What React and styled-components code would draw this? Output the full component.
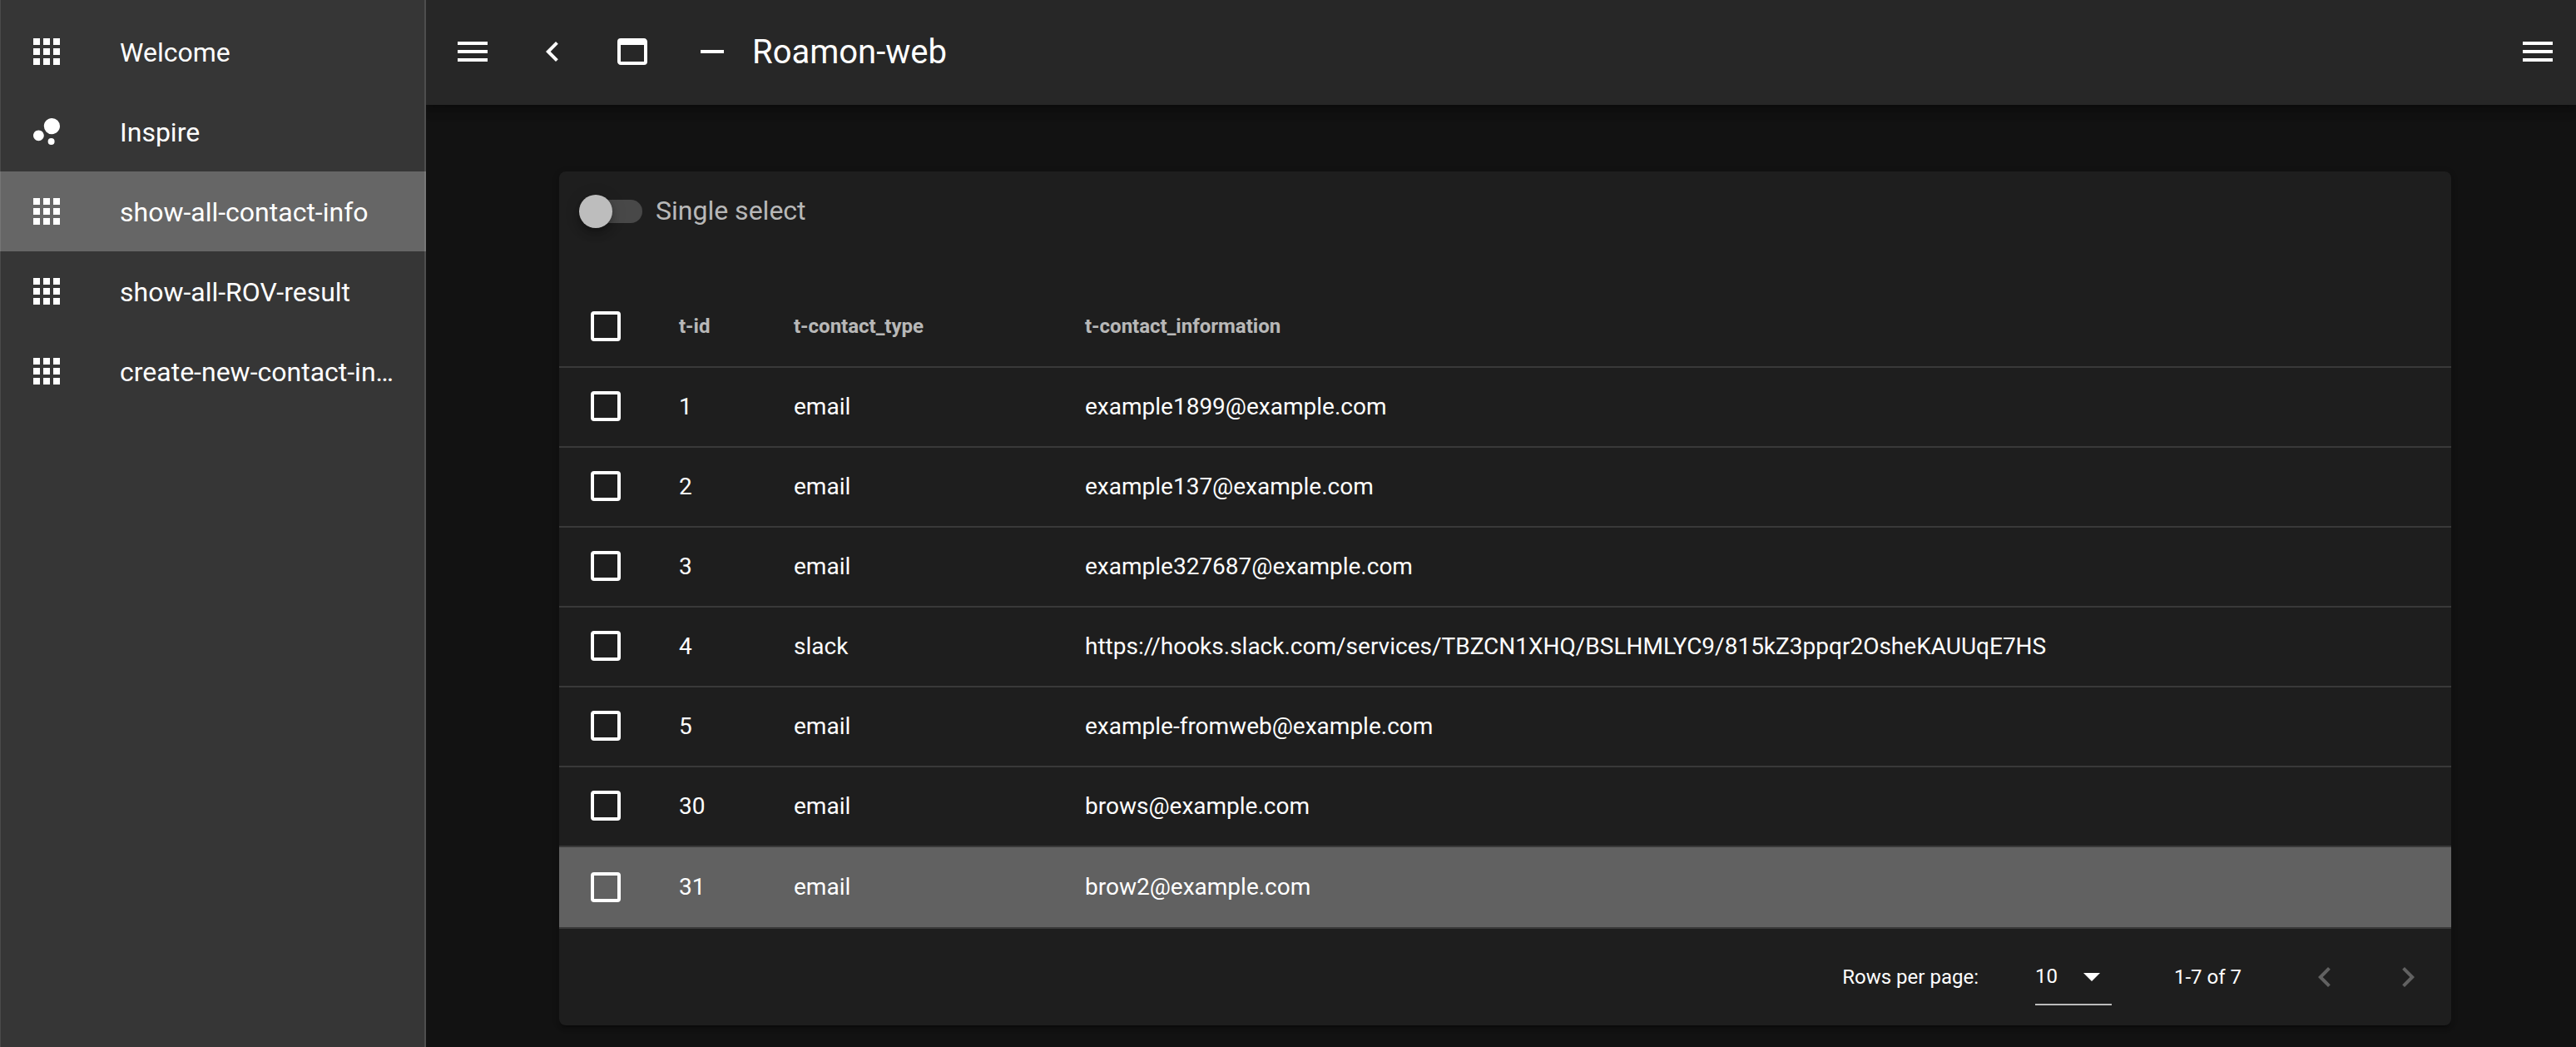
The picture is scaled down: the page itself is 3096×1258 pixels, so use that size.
import React, { useState } from "react";
import styled, { createGlobalStyle } from "styled-components";

const GlobalStyle = createGlobalStyle`
  *, *::before, *::after { box-sizing: border-box; }
  body {
    margin: 0;
    background: #121212;
    color: #fff;
    font-family: Roboto, "Noto Sans", sans-serif;
    font-size: 32px;
    line-height: 48px;
  }
  button, input, select { font: inherit; color: inherit; }
`;

const paths = {
  apps: "M16,20H20V16H16M16,14H20V10H16M10,8H14V4H10M16,8H20V4H16M10,14H14V10H10M4,14H8V10H4M4,20H8V16H4M10,20H14V16H10M4,8H8V4H4V8Z",
  bubble: "M7.2,11.2C8.97,11.2 10.4,12.63 10.4,14.4C10.4,16.17 8.97,17.6 7.2,17.6C5.43,17.6 4,16.17 4,14.4C4,12.63 5.43,11.2 7.2,11.2M14.8,16A2,2 0 0,1 16.8,18A2,2 0 0,1 14.8,20A2,2 0 0,1 12.8,18A2,2 0 0,1 14.8,16M15.2,4A4.8,4.8 0 0,1 20,8.8C20,11.45 17.85,13.6 15.2,13.6A4.8,4.8 0 0,1 10.4,8.8C10.4,6.15 12.55,4 15.2,4Z",
  menu: "M3,6H21V8H3V6M3,11H21V13H3V11M3,16H21V18H3V16Z",
  left: "M15.41,16.58L10.83,12L15.41,7.41L14,6L8,12L14,18L15.41,16.58Z",
  right: "M8.59,16.58L13.17,12L8.59,7.41L10,6L16,12L10,18L8.59,16.58Z",
  application: "M19,4C20.11,4 21,4.9 21,6V18A2,2 0 0,1 19,20H5C3.89,20 3,19.1 3,18V6A2,2 0 0,1 5,4H19M19,18V8H5V18H19Z",
  minus: "M19,13H5V11H19V13Z",
  down: "M7,10L12,15L17,10H7Z",
};

const IconSvg = styled.svg`
  width: 48px;
  height: 48px;
  flex: none;
  display: block;
  fill: currentColor;
`;

const Icon = ({ name, className }) => (
  <IconSvg className={className} viewBox="0 0 24 24" aria-hidden="true">
    <path d={paths[name]} />
  </IconSvg>
);

const Shell = styled.div`
  display: flex;
  min-height: 100vh;
`;

const Drawer = styled.nav`
  width: 512px;
  flex: none;
  padding-top: 14px;
  background: #363636;
  border-right: 2px solid #4e4e4e;
  box-shadow: inset 1px 0 #4a4a4a;
`;

const NavLink = styled.a`
  display: flex;
  align-items: center;
  gap: 64px;
  height: 96px;
  padding: 0 32px;
  margin-right: -2px;
  color: #fff;
  text-decoration: none;
  background: ${(p) => (p.$active ? "rgba(255, 255, 255, 0.24)" : "transparent")};
`;

const NavTitle = styled.span`
  min-width: 0;
  padding-top: 2px;
  overflow: hidden;
  white-space: nowrap;
  text-overflow: ellipsis;
`;

const Page = styled.div`
  flex: 1;
  min-width: 0;
  display: flex;
  flex-direction: column;
`;

const AppBar = styled.header`
  display: flex;
  align-items: center;
  height: 126px;
  padding: 0 0 2px 8px;
  background: #272727;
  box-shadow: 0 4px 8px -2px rgba(0, 0, 0, 0.2), 0 8px 10px rgba(0, 0, 0, 0.14),
    0 2px 20px rgba(0, 0, 0, 0.12);
  clip-path: inset(0 0 -40px 0);
`;

const BarButton = styled.button`
  display: flex;
  align-items: center;
  justify-content: center;
  width: 96px;
  height: 96px;
  flex: none;
  padding: 0;
  border: 0;
  background: none;
`;

const BarTitle = styled.h1`
  flex: 1;
  margin: 0;
  padding-top: 2px;
  font-size: 40px;
  font-weight: 400;
`;

const EndButton = styled(BarButton)`
  margin-right: -2px;
`;

const Content = styled.main`
  padding: 80px 150px 24px 160px;
`;

const Card = styled.section`
  background: #1e1e1e;
  border-radius: 8px;
  box-shadow: 0 6px 2px -4px rgba(0, 0, 0, 0.2), 0 4px 4px rgba(0, 0, 0, 0.14),
    0 2px 10px rgba(0, 0, 0, 0.12);
`;

const SwitchRow = styled.label`
  display: flex;
  align-items: center;
  gap: 16px;
  height: 140px;
  padding: 0 28px 44px;
  color: rgba(255, 255, 255, 0.7);
`;

const SwitchLabel = styled.span`
  padding-bottom: 2px;
`;

const Switch = styled.input`
  appearance: none;
  display: flex;
  align-items: center;
  width: 72px;
  height: 28px;
  margin: 0;
  border-radius: 14px;
  background: #484848;

  &::before {
    content: "";
    width: 40px;
    height: 40px;
    flex: none;
    margin-left: ${(p) => (p.checked ? "36px" : "-4px")};
    border-radius: 50%;
    background: #bdbdbd;
    box-shadow: 0 4px 8px -2px rgba(0, 0, 0, 0.2), 0 8px 10px rgba(0, 0, 0, 0.14),
      0 2px 20px rgba(0, 0, 0, 0.12);
  }
`;

const Table = styled.table`
  width: 100%;
  table-layout: fixed;
  border-collapse: separate;
  border-spacing: 0;
  font-size: 28px;
`;

const Col = styled.col`
  width: ${(p) => p.$width || "auto"};
`;

const Row = styled.tr`
  background: ${(p) => (p.$hovered ? "#616161" : "transparent")};
`;

const HeadCell = styled.th`
  height: 96px;
  padding: 0 32px 2px;
  border-bottom: 2px solid #393939;
  color: rgba(255, 255, 255, 0.7);
  font-size: 24px;
  font-weight: 700;
  text-align: left;
`;

const Cell = styled.td`
  height: 96px;
  padding: 0 32px;
  border-bottom: 2px solid #393939;

  tr:last-child > & { border-bottom: 0; }
`;

const CheckBox = styled.input`
  appearance: none;
  display: block;
  width: 36px;
  height: 36px;
  margin: 0 6px;
  border: 4px solid #fff;
  border-radius: 4px;
  background: ${(p) => (p.checked ? "#fff" : "transparent")};

  tr:not(:last-child) > td > & { margin-bottom: 2px; }
`;

const Footer = styled.footer`
  display: flex;
  align-items: center;
  justify-content: flex-end;
  height: 118px;
  padding-right: 16px;
  border-top: 2px solid #393939;
  font-size: 24px;
`;

const PerPage = styled.label`
  display: flex;
  align-items: center;
  gap: 68px;
`;

const SelectBox = styled.span`
  display: grid;
  align-items: center;
  width: 92px;
  height: 68px;
  border-bottom: 2px solid #bcbcbc;
`;

const Select = styled.select`
  grid-area: 1 / 1;
  appearance: none;
  width: 100%;
  height: 64px;
  padding: 0;
  border: 0;
  background: transparent;
`;

const Arrow = styled(Icon)`
  grid-area: 1 / 1;
  justify-self: end;
  pointer-events: none;
`;

const Range = styled.span`
  margin: 0 64px 0 75px;
`;

const Pager = styled.div`
  display: flex;
  gap: 28px;
`;

const PageButton = styled.button`
  display: flex;
  align-items: center;
  justify-content: center;
  width: 72px;
  height: 72px;
  padding: 0;
  border: 0;
  background: none;

  &:disabled { color: rgba(255, 255, 255, 0.3); }
`;

const links = [
  { icon: "apps", title: "Welcome" },
  { icon: "bubble", title: "Inspire" },
  { icon: "apps", title: "show-all-contact-info", active: true },
  { icon: "apps", title: "show-all-ROV-result" },
  { icon: "apps", title: "create-new-contact-in…" },
];

const contacts = [
  { id: 1, type: "email", info: "example1899@example.com" },
  { id: 2, type: "email", info: "example137@example.com" },
  { id: 3, type: "email", info: "example327687@example.com" },
  { id: 4, type: "slack", info: "https://hooks.slack.com/services/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" },
  { id: 5, type: "email", info: "example-fromweb@example.com" },
  { id: 30, type: "email", info: "brows@example.com" },
  { id: 31, type: "email", info: "brow2@example.com" },
];

export default function App() {
  const [single, setSingle] = useState(false);
  const [selected, setSelected] = useState([]);
  const [hovered, setHovered] = useState(31);

  const toggle = (id) =>
    setSelected((now) => {
      if (now.includes(id)) return now.filter((x) => x !== id);
      return single ? [id] : [...now, id];
    });
  const all = selected.length === contacts.length;

  return (
    <>
      <GlobalStyle />
      <Shell>
        <Drawer>
          {links.map((l) => (
            <NavLink key={l.title} href="#" $active={l.active}>
              <Icon name={l.icon} />
              <NavTitle>{l.title}</NavTitle>
            </NavLink>
          ))}
        </Drawer>
        <Page>
          <AppBar>
            <BarButton aria-label="Toggle drawer"><Icon name="menu" /></BarButton>
            <BarButton aria-label="Collapse drawer"><Icon name="left" /></BarButton>
            <BarButton aria-label="Clip drawer"><Icon name="application" /></BarButton>
            <BarButton aria-label="Toggle footer"><Icon name="minus" /></BarButton>
            <BarTitle>Roamon-web</BarTitle>
            <EndButton aria-label="Open right menu"><Icon name="menu" /></EndButton>
          </AppBar>
          <Content>
            <Card>
              <SwitchRow>
                <Switch
                  type="checkbox"
                  role="switch"
                  checked={single}
                  onChange={() => setSingle(!single)}
                />
                <SwitchLabel>Single select</SwitchLabel>
              </SwitchRow>
              <Table>
                <colgroup>
                  <Col $width="112px" />
                  <Col $width="138px" />
                  <Col $width="350px" />
                  <Col />
                </colgroup>
                <thead>
                  <tr>
                    <HeadCell>
                      <CheckBox
                        type="checkbox"
                        aria-label="Select all"
                        checked={all}
                        onChange={() => setSelected(all ? [] : contacts.map((c) => c.id))}
                      />
                    </HeadCell>
                    <HeadCell>t-id</HeadCell>
                    <HeadCell>t-contact_type</HeadCell>
                    <HeadCell>t-contact_information</HeadCell>
                  </tr>
                </thead>
                <tbody>
                  {contacts.map((c) => (
                    <Row key={c.id} $hovered={hovered === c.id} onMouseEnter={() => setHovered(c.id)}>
                      <Cell>
                        <CheckBox
                          type="checkbox"
                          aria-label={`Select ${c.id}`}
                          checked={selected.includes(c.id)}
                          onChange={() => toggle(c.id)}
                        />
                      </Cell>
                      <Cell>{c.id}</Cell>
                      <Cell>{c.type}</Cell>
                      <Cell>{c.info}</Cell>
                    </Row>
                  ))}
                </tbody>
              </Table>
              <Footer>
                <PerPage>
                  Rows per page:
                  <SelectBox>
                    <Select defaultValue="10">
                      <option>5</option>
                      <option>10</option>
                      <option>15</option>
                    </Select>
                    <Arrow name="down" />
                  </SelectBox>
                </PerPage>
                <Range>1-7 of 7</Range>
                <Pager>
                  <PageButton disabled aria-label="Previous page"><Icon name="left" /></PageButton>
                  <PageButton disabled aria-label="Next page"><Icon name="right" /></PageButton>
                </Pager>
              </Footer>
            </Card>
          </Content>
        </Page>
      </Shell>
    </>
  );
}
